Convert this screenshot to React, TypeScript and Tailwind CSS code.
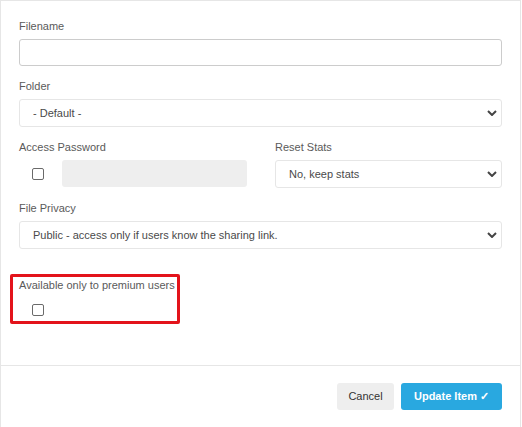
import { ChangeEvent, useState } from "react";

const font = { fontFamily: '"Liberation Sans", Arial, sans-serif' };

function Chevron() {
  return (
    <svg
      width="10"
      height="6"
      viewBox="0 0 10 6"
      className="pointer-events-none absolute right-[5px] top-1/2 -translate-y-1/2"
    >
      <polyline points="1,1 5,5 9,1" fill="none" stroke="#444" strokeWidth="2" />
    </svg>
  );
}

function Select({ value, options, onChange }: { value: string; options: string[]; onChange: (v: string) => void }) {
  return (
    <div className="relative">
      <select
        value={value}
        onChange={(e: ChangeEvent<HTMLSelectElement>) => onChange(e.target.value)}
        className="block h-[28px] w-full appearance-none rounded-[3px] border border-[#e6e6e6] bg-white pl-[13px] text-[11px] text-[#4a4a4a] outline-none"
        style={font}
      >
        {options.map((o) => (
          <option key={o}>{o}</option>
        ))}
      </select>
      <Chevron />
    </div>
  );
}

function Label({ children }: { children: string }) {
  return <div className="mb-[6px] h-[14px] text-[11px] leading-[14px] text-[#5a5a5a]">{children}</div>;
}

function Checkbox({ checked, onChange }: { checked: boolean; onChange: (v: boolean) => void }) {
  return (
    <input
      type="checkbox"
      checked={checked}
      onChange={(e) => onChange(e.target.checked)}
      className="block h-[12px] w-[12px] appearance-none rounded-[2px] border border-[#6a6a6a] bg-white checked:bg-[#29a8e0]"
    />
  );
}

export default function App() {
  const [filename, setFilename] = useState("");
  const [folder, setFolder] = useState("- Default -");
  const [usePassword, setUsePassword] = useState(false);
  const [reset, setReset] = useState("No, keep stats");
  const [privacy, setPrivacy] = useState("Public - access only if users know the sharing link.");
  const [premium, setPremium] = useState(false);

  return (
    <div className="h-[427px] w-[522px] overflow-hidden bg-white" style={font}>
      <div className="h-[440px] w-[521px] border border-[#e6e6e6] bg-white">
        <div className="px-[18px] pt-[18px]">
          <Label>Filename</Label>
          <input
            value={filename}
            onChange={(e) => setFilename(e.target.value)}
            className="mb-[13px] block h-[27px] w-full rounded-[3px] border border-[#cccccc] px-[13px] text-[11px] outline-none"
            style={font}
          />

          <Label>Folder</Label>
          <div className="mb-[13px]">
            <Select value={folder} options={["- Default -"]} onChange={setFolder} />
          </div>

          <div className="mb-[13px] grid grid-cols-[240px_1fr] gap-x-4">
            <div>
              <Label>Access Password</Label>
              <div className="flex h-[27px] items-center">
                <div className="ml-[13px] w-[30px]">
                  <Checkbox checked={usePassword} onChange={setUsePassword} />
                </div>
                <input
                  disabled={!usePassword}
                  className="h-[27px] w-[185px] rounded-[3px] bg-[#eeeeee] px-2 text-[11px] outline-none"
                />
              </div>
            </div>
            <div>
              <Label>Reset Stats</Label>
              <Select value={reset} options={["No, keep stats", "Yes, reset stats"]} onChange={setReset} />
            </div>
          </div>

          <Label>File Privacy</Label>
          <Select
            value={privacy}
            options={["Public - access only if users know the sharing link.", "Private - no access outside of your account."]}
            onChange={setPrivacy}
          />

          <div className="-ml-[9px] mb-[41px] mt-[25px] w-[170px] rounded-[2px] border-[3px] border-[#e3131b] pb-[5px] pl-[6px] pt-[1px]">
            <div className="h-[14px] text-[11px] leading-[14px] text-[#5a5a5a]">Available only to premium users</div>
            <div className="ml-[13px] mt-[12px]">
              <Checkbox checked={premium} onChange={setPremium} />
            </div>
          </div>
        </div>

        <div className="flex justify-end gap-[7px] border-t border-[#e6e6e6] px-[18px] pt-[17px]">
          <button className="h-[27px] w-[57px] rounded-[3px] bg-[#eeeeee] text-[11px] text-[#333]">Cancel</button>
          <button className="h-[27px] w-[101px] rounded-[3px] bg-[#29a8e0] text-[11px] font-bold text-white">
            Update Item ✓
          </button>
        </div>
      </div>
    </div>
  );
}
